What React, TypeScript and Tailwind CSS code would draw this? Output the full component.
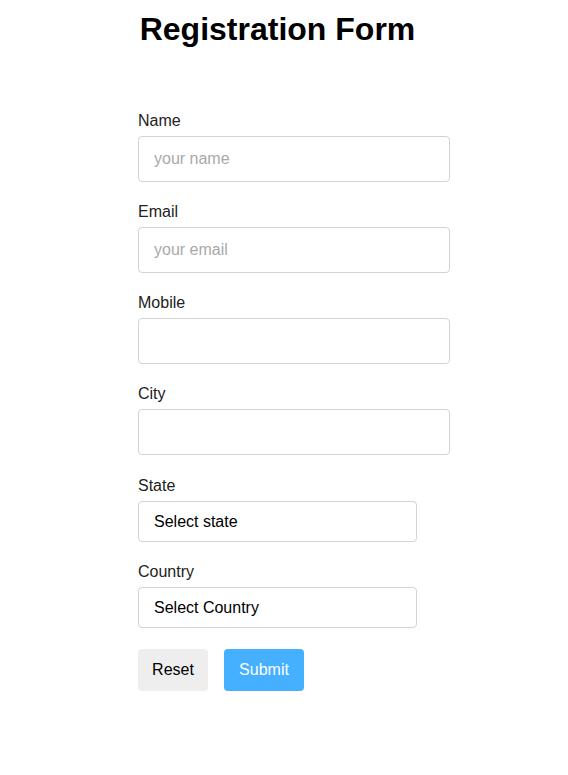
import React from "react";

const font = { fontFamily: '"Liberation Sans", Arial, sans-serif' };

function Field({ label, placeholder }: { label: string; placeholder?: string }) {
  return (
    <div className="flex flex-col">
      <label className="text-[16px] leading-[18px] text-[#222] mb-[6px]">{label}</label>
      <input
        className="w-[312px] h-[46px] border border-[#d3d3d3] rounded-[4px] pl-[15px] text-[16px] text-black placeholder:text-[#a9a9a9] outline-none bg-white"
        placeholder={placeholder}
      />
    </div>
  );
}

function SelectField({ label, text, extra }: { label: string; text: string; extra?: boolean }) {
  return (
    <div className={extra ? "flex flex-col pt-[1px]" : "flex flex-col"}>
      <label className="text-[16px] leading-[18px] text-[#222] mb-[6px]">{label}</label>
      <div className="w-[279px] h-[41px] border border-[#d3d3d3] rounded-[4px] pl-[15px] flex items-center text-[16px] text-black bg-white">
        {text}
      </div>
    </div>
  );
}

export default function App() {
  return (
    <div className="min-h-[775px] bg-white" style={font}>
      <div className="ml-[138px] w-[279px] flex flex-col">
        <h1 className="pt-[11px] text-[32px] leading-[37px] font-bold text-black text-center whitespace-nowrap">
          Registration Form
        </h1>
        <div className="mt-[64px] flex flex-col gap-[21px]">
          <Field label="Name" placeholder="your name" />
          <Field label="Email" placeholder="your email" />
          <Field label="Mobile" />
          <Field label="City" />
          <SelectField label="State" text="Select state" extra />
          <SelectField label="Country" text="Select Country" />
        </div>
        <div className="mt-[21px] flex gap-[16px]">
          <button className="w-[70px] h-[42px] bg-[#eeeeee] rounded-[4px] text-[16px] text-black">Reset</button>
          <button className="w-[80px] h-[42px] bg-[#44b0ff] rounded-[4px] text-[16px] text-white">Submit</button>
        </div>
      </div>
    </div>
  );
}
